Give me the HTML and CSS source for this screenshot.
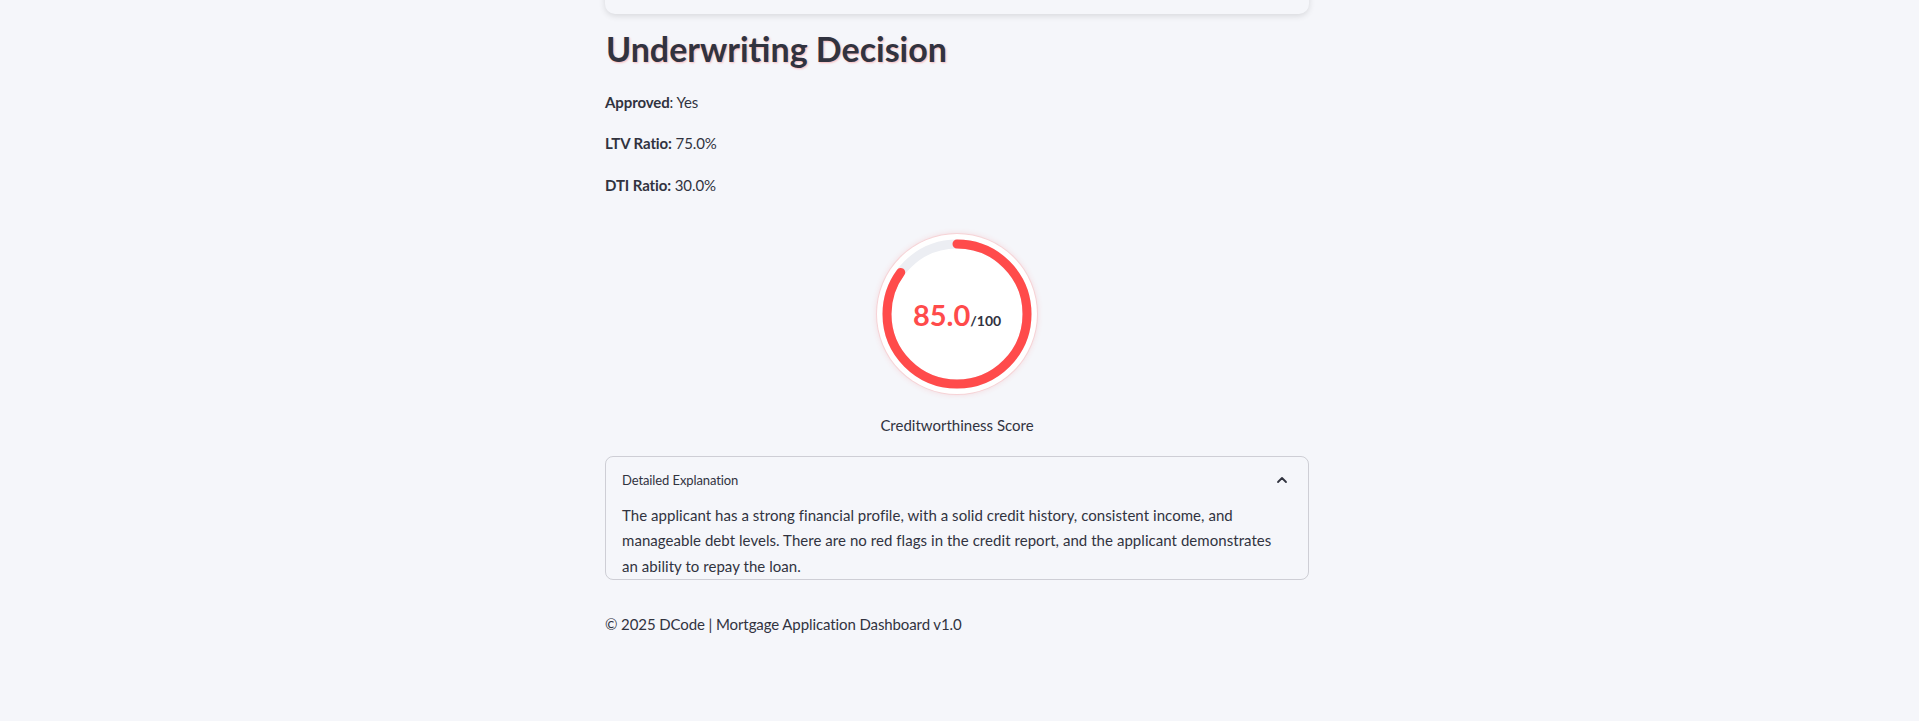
FILE: index.html
```html
<!DOCTYPE html>
<html lang="en">
<head>
<meta charset="utf-8">
<title>Mortgage Application Dashboard</title>
<link rel="stylesheet" href="styles.css">
</head>
<body>
<main class="main">
  <div class="top-card"></div>

  <h2 class="title">Underwriting Decision</h2>

  <p class="stat"><strong>Approved</strong>: Yes</p>
  <p class="stat"><strong>LTV Ratio:</strong> 75.0%</p>
  <p class="stat"><strong>DTI Ratio:</strong> 30.0%</p>

  <div class="gauge-wrap">
    <div class="gauge">
      <svg class="gauge-svg" width="160" height="160" viewBox="0 0 160 160">
        <circle cx="80" cy="80" r="70" fill="none" stroke="#eceef3" stroke-width="9"/>
        <circle cx="80" cy="80" r="70" fill="none" stroke="#ff4b4b" stroke-width="9" stroke-linecap="round" stroke-dasharray="373.85 439.82" transform="rotate(-90 80 80)"/>
      </svg>
      <div class="gauge-value"><span class="score">85.0</span><span class="max">/100</span></div>
    </div>
    <p class="gauge-label">Creditworthiness Score</p>
  </div>

  <details class="expander" open>
    <summary class="expander-head">
      <span>Detailed Explanation</span>
      <svg class="chev" width="16" height="16" viewBox="0 0 16 16"><path d="M4 10 L8 6 L12 10" fill="none" stroke="#31333f" stroke-width="1.8" stroke-linecap="round" stroke-linejoin="round"/></svg>
    </summary>
    <div class="expander-body">
      <p>The applicant has a strong financial profile, with a solid credit history, consistent income, and<br>manageable debt levels. There are no red flags in the credit report, and the applicant demonstrates<br>an ability to repay the loan.</p>
    </div>
  </details>

  <p class="footer">© 2025 DCode | Mortgage Application Dashboard v1.0</p>
</main>
</body>
</html>
```
FILE: styles.css
```css
html, body {
  margin: 0;
  padding: 0;
}
body {
  background: #f5f6fa;
  color: #31333f;
  font-family: Lato, "Noto Sans", sans-serif;
  font-size: 15px;
  letter-spacing: -0.1px;
  padding-right: 5px;
  overflow: hidden;
}
.main {
  width: 704px;
  margin: 0 auto;
  display: flex;
  flex-direction: column;
}
.top-card {
  height: 54px;
  margin-top: -40px;
  border-radius: 10px;
  background: #f5f6fa;
  box-shadow: 0 2px 6px rgba(0, 0, 0, 0.12);
}
.title {
  margin: 15px 0 0 1px;
  font-size: 34px;
  font-weight: 700;
  line-height: 1.2;
  letter-spacing: 0;
  color: #31333f;
  text-shadow: 1px 1px 2px rgba(255, 75, 75, 0.35);
}
.stat {
  margin: 0 0 16px;
  font-size: 15px;
  line-height: 25.6px;
}
.stat:first-of-type {
  margin-top: 20px;
}
.stat strong {
  font-weight: 700;
}
.gauge-wrap {
  margin-top: 19px;
  display: flex;
  flex-direction: column;
  align-items: center;
}
.gauge {
  width: 160px;
  height: 160px;
  border-radius: 50%;
  background: #ffffff;
  box-shadow: 0 0 0 1px rgba(255, 75, 75, 0.12), 0 0 6px rgba(255, 75, 75, 0.2);
  position: relative;
  display: flex;
  align-items: center;
  justify-content: center;
}
.gauge-svg {
  position: absolute;
  left: 0;
  top: 0;
}
.gauge-value {
  position: relative;
  display: flex;
  align-items: baseline;
  margin-top: 2px;
  letter-spacing: 0;
}
.score {
  font-size: 29px;
  font-weight: 700;
  color: #ff4b4b;
}
.max {
  font-size: 14px;
  font-weight: 700;
  color: #31333f;
}
.gauge-label {
  margin: 19px 0 0;
  font-size: 15px;
  line-height: 25.6px;
  letter-spacing: 0;
}
.expander {
  margin-top: 18px;
  border: 1px solid rgba(49, 51, 63, 0.2);
  border-radius: 8px;
}
.expander-head {
  list-style: none;
  display: flex;
  justify-content: space-between;
  align-items: center;
  padding: 12px 16px 0;
  font-size: 13px;
  line-height: 22.4px;
  cursor: pointer;
}
.expander-head::-webkit-details-marker {
  display: none;
}
.chev {
  margin-right: 2px;
}
.expander-body {
  padding: 11px 16px 0;
}
.expander-body p {
  margin: 0;
  font-size: 15px;
  line-height: 25.6px;
  letter-spacing: 0.05px;
  white-space: nowrap;
}
.footer {
  margin: 32px 0 0;
  font-size: 15px;
  line-height: 25.6px;
}
```
